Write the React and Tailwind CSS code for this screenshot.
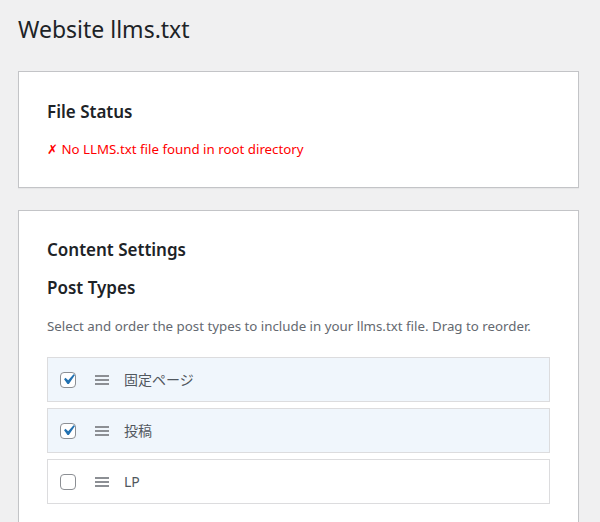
const font = { fontFamily: '"Noto Sans", "Noto Sans CJK JP", sans-serif' };

const postTypes = [
  { label: '固定ページ', checked: true },
  { label: '投稿', checked: true },
  { label: 'LP', checked: false },
];

const Checkbox = ({ checked }) => (
  <span className="relative block h-4 w-4 shrink-0 rounded-[4px] border border-[#8c8f94] bg-white">
    {checked && (
      <svg
        width="21"
        height="21"
        viewBox="0 0 20 20"
        className="absolute -left-[3.5px] -top-[3.5px] text-[#2271b1]"
      >
        <path
          d="M14.83 4.89l1.34.94-5.81 8.38H9.02L5.78 9.67l1.34-1.25 2.57 2.4z"
          fill="currentColor"
        />
      </svg>
    )}
  </span>
);

const DragHandle = () => (
  <span className="flex w-[14px] shrink-0 flex-col gap-[2px]">
    <span className="h-[2px] w-full bg-[#8c8f94]" />
    <span className="h-[2px] w-full bg-[#8c8f94]" />
    <span className="h-[2px] w-full bg-[#8c8f94]" />
  </span>
);

const PostTypeRow = ({ label, checked }) => (
  <div
    className={`flex h-[45px] items-center border border-[#dcdcde] pl-3 ${
      checked ? 'bg-[#f0f6fc]' : 'bg-white'
    }`}
  >
    <Checkbox checked={checked} />
    <span className="ml-[19px]">
      <DragHandle />
    </span>
    <span className="ml-[15px] text-[14px] leading-5 text-[#50575e]">{label}</span>
  </div>
);

export default function App() {
  return (
    <div className="min-h-[522px] bg-[#f0f0f1] pl-[18px] pr-[21px]" style={font}>
      <h1 className="pt-[14px] text-[23px] leading-[30px] font-normal text-[#1d2327]">
        Website llms.txt
      </h1>

      <div className="mt-[27px] border border-[#c3c4c7] bg-white px-7 pt-[28px] pb-[28px] shadow-[0_1px_1px_rgba(0,0,0,0.04)]">
        <h2 className="text-[17px] leading-6 font-semibold text-[#1d2327]">File Status</h2>
        <p className="mt-[15px] text-[13.3px] leading-5 text-[#ff0000]">
          ✗ No LLMS.txt file found in root directory
        </p>
      </div>

      <div className="mt-[22px] border border-[#c3c4c7] bg-white px-7 pt-[27px] pb-10 shadow-[0_1px_1px_rgba(0,0,0,0.04)]">
        <h2 className="text-[17px] leading-6 font-semibold text-[#1d2327]">Content Settings</h2>
        <h3 className="mt-[14px] text-[17px] leading-6 font-semibold text-[#1d2327]">
          Post Types
        </h3>
        <p className="mt-4 text-[13.3px] leading-5 text-[#646970]">
          Select and order the post types to include in your llms.txt file. Drag to reorder.
        </p>
        <div className="mt-[21px] flex flex-col gap-[6px]">
          {postTypes.map((item) => (
            <PostTypeRow key={item.label} {...item} />
          ))}
        </div>
      </div>
    </div>
  );
}
